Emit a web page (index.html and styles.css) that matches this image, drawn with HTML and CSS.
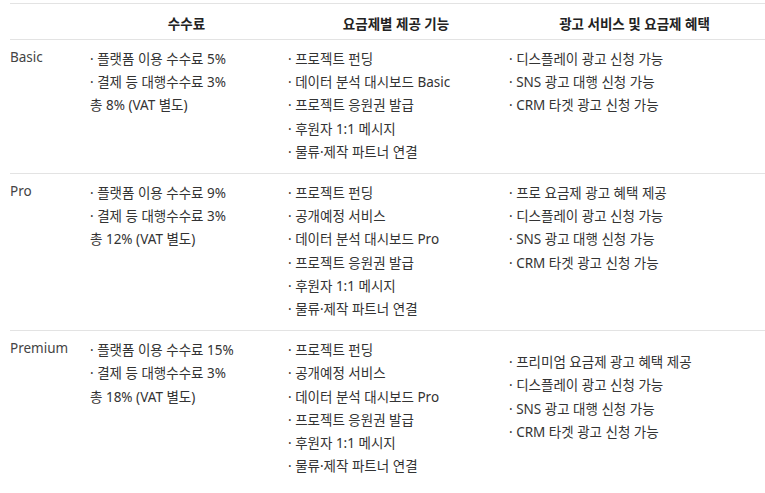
FILE: index.html
```html
<!DOCTYPE html>
<html lang="ko">
<head>
<meta charset="utf-8">
<link rel="stylesheet" href="styles.css">
</head>
<body>
<div class="wrap">
<table class="plans">
  <colgroup>
    <col class="c-label"><col class="c-fee"><col class="c-feat"><col class="c-ad">
  </colgroup>
  <thead>
    <tr>
      <th></th>
      <th>수수료</th>
      <th>요금제별 제공 기능</th>
      <th>광고 서비스 및 요금제 혜택</th>
    </tr>
  </thead>
  <tbody>
    <tr>
      <td class="label">Basic</td>
      <td>
        <div class="ln">· 플랫폼 이용 수수료 5%</div>
        <div class="ln">· 결제 등 대행수수료 3%</div>
        <div class="ln">총 8% (VAT 별도)</div>
      </td>
      <td>
        <div class="ln">· 프로젝트 펀딩</div>
        <div class="ln">· 데이터 분석 대시보드 Basic</div>
        <div class="ln">· 프로젝트 응원권 발급</div>
        <div class="ln">· 후원자 1:1 메시지</div>
        <div class="ln">· 물류·제작 파트너 연결</div>
      </td>
      <td>
        <div class="ln">· 디스플레이 광고 신청 가능</div>
        <div class="ln">· SNS 광고 대행 신청 가능</div>
        <div class="ln">· CRM 타겟 광고 신청 가능</div>
      </td>
    </tr>
    <tr>
      <td class="label">Pro</td>
      <td>
        <div class="ln">· 플랫폼 이용 수수료 9%</div>
        <div class="ln">· 결제 등 대행수수료 3%</div>
        <div class="ln">총 12% (VAT 별도)</div>
      </td>
      <td>
        <div class="ln">· 프로젝트 펀딩</div>
        <div class="ln">· 공개예정 서비스</div>
        <div class="ln">· 데이터 분석 대시보드 Pro</div>
        <div class="ln">· 프로젝트 응원권 발급</div>
        <div class="ln">· 후원자 1:1 메시지</div>
        <div class="ln">· 물류·제작 파트너 연결</div>
      </td>
      <td>
        <div class="ln">· 프로 요금제 광고 혜택 제공</div>
        <div class="ln">· 디스플레이 광고 신청 가능</div>
        <div class="ln">· SNS 광고 대행 신청 가능</div>
        <div class="ln">· CRM 타겟 광고 신청 가능</div>
      </td>
    </tr>
    <tr class="last">
      <td class="label">Premium</td>
      <td>
        <div class="ln">· 플랫폼 이용 수수료 15%</div>
        <div class="ln">· 결제 등 대행수수료 3%</div>
        <div class="ln">총 18% (VAT 별도)</div>
      </td>
      <td>
        <div class="ln">· 프로젝트 펀딩</div>
        <div class="ln">· 공개예정 서비스</div>
        <div class="ln">· 데이터 분석 대시보드 Pro</div>
        <div class="ln">· 프로젝트 응원권 발급</div>
        <div class="ln">· 후원자 1:1 메시지</div>
        <div class="ln">· 물류·제작 파트너 연결</div>
      </td>
      <td>
        <div class="shifted">
          <div class="ln">· 프리미엄 요금제 광고 혜택 제공</div>
          <div class="ln">· 디스플레이 광고 신청 가능</div>
          <div class="ln">· SNS 광고 대행 신청 가능</div>
          <div class="ln">· CRM 타겟 광고 신청 가능</div>
        </div>
      </td>
    </tr>
  </tbody>
</table>
</div>
</body>
</html>
```

FILE: styles.css
```css
html, body {
  margin: 0;
  padding: 0;
  background: #ffffff;
}
.wrap {
  padding: 3px 0 0 10px;
}
.plans {
  width: 755px;
  table-layout: fixed;
  border-collapse: collapse;
  font-family: "Noto Sans", "Noto Sans CJK KR", sans-serif;
  font-size: 13.5px;
  color: #333333;
}
.c-label { width: 80px; }
.c-fee { width: 198px; }
.c-feat { width: 221px; }
.c-ad { width: 256px; }
.plans th {
  height: 33px;
  padding: 2px 5px 0 0;
  text-align: center;
  font-weight: 700;
  color: #222222;
  border-top: 1px solid #e3e3e3;
  border-bottom: 1px solid #e3e3e3;
}
.plans td {
  vertical-align: top;
  padding: 8px 5px 9px 0;
  border-bottom: 1px solid #e3e3e3;
}
.plans tr.last td {
  border-bottom: none;
}
.ln {
  line-height: 23.2px;
  white-space: nowrap;
}
.label {
  color: #444444;
}
.shifted {
  margin-top: 12px;
}
```
